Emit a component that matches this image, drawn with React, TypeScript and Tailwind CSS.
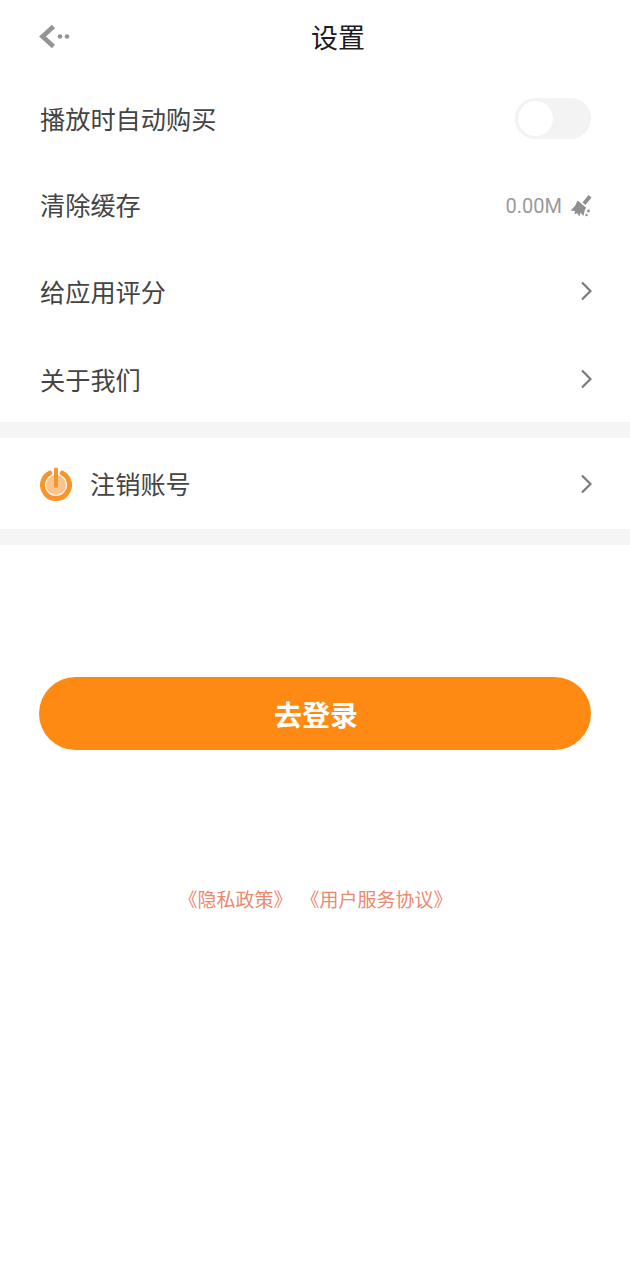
const cjk = "font-['Noto_Sans_CJK_SC','Noto_Sans',sans-serif]";

function Chevron() {
  return (
    <svg width="12" height="20" viewBox="0 0 12 20" fill="none" className="block">
      <path d="M2 1.5 L10.5 10 L2 18.5" stroke="#7a7a7a" strokeWidth="2.2" />
    </svg>
  );
}

function Row({ label, right, className }: { label: string; right: React.ReactNode; className: string }) {
  return (
    <div className={`flex items-center justify-between pl-10 pr-[38px] ${className}`}>
      <span className="text-[25.2px] leading-[36px] text-[#444444]">{label}</span>
      {right}
    </div>
  );
}

export default function App() {
  return (
    <div className={`flex min-h-[1280px] w-[630px] flex-col bg-white ${cjk}`}>
      {/* Header */}
      <header className="relative flex h-[74px] items-center justify-center">
        <svg width="32" height="26" viewBox="0 0 32 26" fill="none" className="absolute left-[38px] top-6">
          <path d="M15.5 2.5 L4.5 12.5 L15.5 22.5" stroke="#949494" strokeWidth="4.6" />
          <circle cx="22" cy="12.5" r="2.3" fill="#949494" />
          <circle cx="29" cy="12.5" r="2.3" fill="#949494" />
        </svg>
        <h1 className="ml-[46px] text-[27px] font-normal leading-[38px] text-[#1c1c1c]">设置</h1>
      </header>

      <Row
        label="播放时自动购买"
        className="h-[88px]"
        right={
          <div className="mr-px flex h-[41px] w-[76px] items-center rounded-full bg-[#f3f3f3] pl-[3px]">
            <div className="h-[35px] w-[35px] rounded-full bg-white" />
          </div>
        }
      />
      <Row
        label="清除缓存"
        className="h-[85px] pb-[2px]"
        right={
          <div className="flex items-center gap-2 pt-1">
            <span className="font-['Roboto',sans-serif] text-[20px] leading-[28px] text-[#9a9a9a]">0.00M</span>
            <svg width="22" height="22" viewBox="0 0 22 22" fill="#8f8f8f">
              <path d="M18.5 0 L21.5 2.5 L15.5 10 L12.5 7.5 Z" />
              <path d="M7.5 5.5 L16 12.5 L14.5 16 L13.5 21 L10.5 17.5 L9.5 21.5 L7 18 L4.5 19.5 L5 16 L0.5 15.5 L5 11 Z" />
              <circle cx="18.5" cy="16" r="1.4" />
              <circle cx="16.5" cy="20" r="1.2" />
            </svg>
          </div>
        }
      />
      <Row label="给应用评分" className="h-[88px]" right={<Chevron />} />
      <Row label="关于我们" className="h-[87px]" right={<Chevron />} />

      <div className="h-4 bg-[#f5f5f5]" />

      <div className="flex h-[91px] items-center justify-between pl-10 pr-[38px]">
        <div className="flex items-center gap-[18px]">
          <svg width="32" height="34" viewBox="0 0 32 34" fill="none">
            <circle cx="16" cy="18" r="10" fill="#fcc48c" />
            <path d="M9.7 6.1 A13.5 13.5 0 1 0 22.3 6.1" stroke="#f7952b" strokeWidth="5" strokeLinecap="round" />
            <path d="M16 2.5 V19" stroke="#f7952b" strokeWidth="4" strokeLinecap="round" />
          </svg>
          <span className="mb-[2px] text-[25.2px] leading-[36px] text-[#444444]">注销账号</span>
        </div>
        <Chevron />
      </div>

      <div className="h-4 bg-[#f5f5f5]" />

      {/* Login */}
      <div className="pl-[39px] pr-[39px] pt-[132px]">
        <button
          type="button"
          className="flex h-[73px] w-full items-center justify-center rounded-full bg-[#ff8a13] pl-[2px] text-[28px] font-bold text-white"
        >
          去登录
        </button>
      </div>

      <div className="mt-[134px] flex justify-center gap-2 pl-px text-[19px] leading-[30px] text-[#ea8871]">
        <span>《隐私政策》</span>
        <span>《用户服务协议》</span>
      </div>
    </div>
  );
}
